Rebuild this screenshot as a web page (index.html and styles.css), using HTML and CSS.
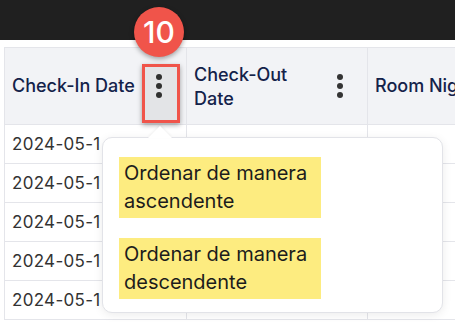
FILE: index.html
```html
<!DOCTYPE html>
<html lang="es">

<head>
    <meta charset="UTF-8">
    <meta name="viewport" content="width=device-width, initial-scale=1.0">
    <title>Reservas</title>
    <link rel="stylesheet" href="styles.css">
</head>

<body>
    <div class="topbar"></div>
    <div class="page">
        <table class="grid">
            <thead>
                <tr>
                    <th class="col-in">
                        <div class="head-cell">
                            <span class="head-label">Check-In Date</span>
                            <span class="kebab">
                                <i></i><i></i><i></i>
                            </span>
                        </div>
                    </th>
                    <th class="col-out">
                        <div class="head-cell">
                            <span class="head-label narrow">Check-Out Date</span>
                            <span class="kebab">
                                <i></i><i></i><i></i>
                            </span>
                        </div>
                    </th>
                    <th class="col-nights">
                        <div class="head-cell">
                            <span class="head-label nowrap">Room Nights</span>
                        </div>
                    </th>
                </tr>
            </thead>
            <tbody>
                <tr><td>2024-05-1</td><td></td><td></td></tr>
                <tr><td>2024-05-1</td><td></td><td></td></tr>
                <tr><td>2024-05-1</td><td></td><td></td></tr>
                <tr><td>2024-05-1</td><td></td><td></td></tr>
                <tr><td>2024-05-1</td><td></td><td></td></tr>
            </tbody>
        </table>
    </div>

    <!-- anotaciones del tutorial -->
    <div class="step-badge">10</div>
    <div class="step-box"></div>

    <div class="sort-menu">
        <span class="sort-arrow"></span>
        <div class="sort-option">Ordenar de manera ascendente</div>
        <div class="sort-option">Ordenar de manera descendente</div>
    </div>
</body>
</html>
```

FILE: styles.css
```css
body {
    margin: 0;
    font-family: 'Inter', 'Noto Sans', sans-serif;
    background-color: #ffffff;
    width: 455px;
    height: 322px;
    overflow: hidden;
    position: relative;
}

.topbar {
    height: 40px;
    background-color: #202020;
}

.page {
    padding: 7px 0 0 4px;
}

.grid {
    border-collapse: collapse;
    table-layout: fixed;
    width: 520px;
}

.grid th,
.grid td {
    border: 1px solid #e4e5ea;
    padding: 0 0 0 7px;
    text-align: left;
}

.grid th {
    background-color: #f2f3f6;
    height: 76px;
    font-weight: 500;
    color: #14224a;
    font-size: 18px;
    line-height: 24px;
}

.col-in {
    width: 174px;
}

.col-out {
    width: 173px;
}

.head-cell {
    display: flex;
    align-items: center;
    justify-content: space-between;
    padding-right: 17px;
}

.narrow {
    max-width: 115px;
    align-self: flex-start;
    margin-top: 2px;
}

.nowrap {
    white-space: nowrap;
}

.kebab {
    display: flex;
    flex-direction: column;
    align-items: center;
    gap: 3px;
    width: 20px;
    flex-shrink: 0;
}

.kebab i {
    display: block;
    width: 6px;
    height: 6px;
    border-radius: 50%;
    background-color: #343434;
}

.grid td {
    height: 38px;
    font-size: 17px;
    color: #333333;
    letter-spacing: 0.3px;
}

.step-badge {
    position: absolute;
    left: 134px;
    top: 7px;
    width: 50px;
    height: 50px;
    border-radius: 50%;
    background-color: #f0544a;
    color: #ffffff;
    font-size: 30px;
    font-weight: 500;
    display: flex;
    align-items: center;
    justify-content: center;
    box-shadow: 0 2px 5px rgba(0, 0, 0, 0.35);
}

.step-box {
    position: absolute;
    left: 142px;
    top: 64px;
    width: 32px;
    height: 53px;
    border: 3px solid #f0544a;
    background-color: rgba(0, 0, 0, 0.06);
    box-shadow: 0 2px 5px rgba(0, 0, 0, 0.35);
}

.sort-menu {
    position: absolute;
    left: 102px;
    top: 137px;
    width: 341px;
    height: 176px;
    box-sizing: border-box;
    padding: 19px 0 0 16px;
    background-color: #ffffff;
    border: 1px solid #e2e3e8;
    border-radius: 10px;
    box-shadow: 0 2px 10px rgba(0, 0, 0, 0.08);
    display: flex;
    flex-direction: column;
    gap: 20px;
}

.sort-arrow {
    position: absolute;
    left: 45px;
    top: -12px;
    width: 0;
    height: 0;
    border-left: 12px solid transparent;
    border-right: 12px solid transparent;
    border-bottom: 12px solid #ffffff;
    filter: drop-shadow(0 -1px 1px rgba(0, 0, 0, 0.06));
}

.sort-option {
    width: 193px;
    padding: 2px 4px 3px 5px;
    background-color: #fdec80;
    color: #1c1c1c;
    font-size: 20px;
    line-height: 28px;
}
```
